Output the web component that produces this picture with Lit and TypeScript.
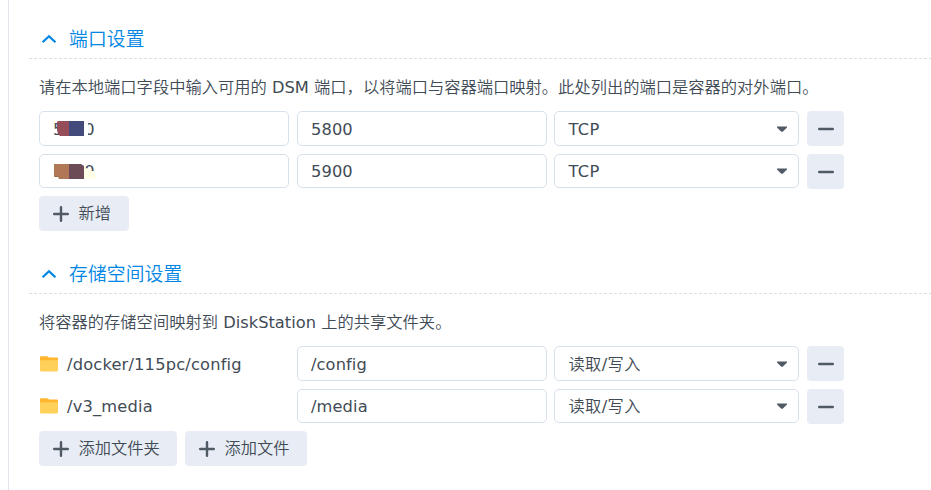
import { LitElement, html, css, svg } from "lit";
import { customElement } from "lit/decorators.js";

const chevron = svg`<svg class="chev" width="16" height="10" viewBox="0 0 16 10"><path d="M1.6 8.3 8 2.2l6.4 6.1" fill="none" stroke="#0086e5" stroke-width="2.2"/></svg>`;
const plus = svg`<svg class="plus" width="16" height="16" viewBox="0 0 16 16"><path d="M1.2 8h13.6M8 1.2v13.6" stroke="#505a64" stroke-width="2.4" stroke-linecap="round"/></svg>`;
const minus = svg`<svg width="16" height="4" viewBox="0 0 16 4"><path d="M1.2 2h13.6" stroke="#505a64" stroke-width="2.4" stroke-linecap="round"/></svg>`;
const caret = svg`<svg width="10" height="6" viewBox="0 0 10 6"><path d="M0 .5h10v1L6.2 5.2q-1.2 1-2.4 0L0 1.5z" fill="#505a64"/></svg>`;
const folder = svg`<svg class="folder" width="18" height="16" viewBox="0 0 18 16"><path d="M0 1.2Q0 .2 1 .2h6.4L9 1.6h8q1 0 1 1V8H0z" fill="#ffb62e"/><path d="M0 5.2q0-1 1-1h16q1 0 1 1V14q0 1.6-1.4 1.6H1.4Q0 15.6 0 14z" fill="#ffd05a"/></svg>`;
const masks = [
  svg`<svg class="mask" width="46" height="20" viewBox="0 0 46 20"><path d="M31 2h4v17h-4z" fill="#fff"/><path d="M4 5l1-1h11v15H7l-2-2-1-4z" fill="#954d59"/><path d="M16 4h15v15H16z" fill="#424b7b"/></svg>`,
  svg`<svg class="mask" width="46" height="20" viewBox="0 0 46 20"><path d="M1 4h15v15H6l-1-2-4-1z" fill="#b17857"/><path d="M16 4h12l3 2v13H16z" fill="#6c4b57"/><path d="M31 9l3-1 4 3h3l2 8H31z" fill="#ffffe8"/></svg>`,
];

@customElement("app-root")
export class AppRoot extends LitElement {
  static styles = css`
    :host { display: block; height: 490px; overflow: hidden; background: #fff;
      font: 16.25px/20px "DejaVu Sans", "Noto Sans CJK SC", sans-serif; color: #414b55; }
    .panel { box-sizing: border-box; height: 490px; margin-left: 8px; padding: 20px 0 0 20px; border-left: 1px solid #e0e5eb; }
    section { height: 235px; }
    header { display: flex; align-items: center; height: 38px; padding-left: 12px; color: #0086e5;
      font-size: 18.75px; }
    .chev { margin-right: 12px; }
    .title { line-height: 38px; padding-top: 2px; font-weight: 350; letter-spacing: 0.15px; }
    .rule { height: 1px; background: repeating-linear-gradient(90deg, #d7dde3 0 3px, #fff 3px 5px); }
    .body { padding-left: 10px; }
    .desc { height: 52px; line-height: 57px; white-space: nowrap; letter-spacing: 0.02px; }
    .grid { display: grid; grid-template-columns: 250px 250px 245px 37px; grid-template-rows: 35px 34px; column-gap: 8px; row-gap: 8px; }
    .field { box-sizing: border-box; display: flex; align-items: center; padding: 1px 13px 0; border: 1px solid #d7e1eb; border-radius: 5px; }
    .field > span { padding-top: 1.2px; letter-spacing: 0.1px; }
    .select { justify-content: space-between; margin-left: -1px; width: 245px; padding: 0 11px 0 13.5px; }
    .select > span { padding-top: 2.2px; letter-spacing: 0.35px; }
    .masked { position: relative; }
    .mask { position: absolute; left: 13px; top: 5px; }
    .path { display: flex; align-items: center; }
    .path span { padding-top: 2px; letter-spacing: 0.18px; }
    .folder { margin: 0 9px 0 1px; }
    .btn { box-sizing: border-box; display: flex; align-items: center; height: 35px; background: #e8edf5; border-radius: 4px; }
    .remove { justify-content: center; width: 37px; margin-left: -1px; }
    .actions { display: flex; gap: 8px; margin-top: 8px; }
    .add { padding: 0 17.3px 0 14px; }
    .add:only-child { width: 90px; }
    .plus { margin-right: 9.5px; }
    .cjk { font-weight: 350; }
    .latin { font-weight: 400; }
  `;

  mixed(text: string) {
    return text.split(/([\x21-\x7e]+)/).map((part, i) => (i % 2 ? html`<span class="latin">${part}</span>` : part));
  }

  select(text: string) {
    return html`<div class="field select"><span class="cjk">${this.mixed(text)}</span>${caret}</div><div class="btn remove">${minus}</div>`;
  }

  add(text: string) {
    return html`<div class="btn add">${plus}<span class="cjk">${text}</span></div>`;
  }

  render() {
    return html`<div class="panel">
      <section>
        <header>${chevron}<span class="title">端口设置</span></header>
        <div class="rule"></div>
        <div class="body">
          <div class="desc cjk">${this.mixed("请在本地端口字段中输入可用的 DSM 端口，以将端口与容器端口映射。此处列出的端口是容器的对外端口。")}</div>
          <div class="grid">
            ${["5800", "5900"].map((port, i) => html`<div class="field masked"><span>${port}</span>${masks[i]}</div><div class="field"><span>${port}</span></div>${this.select("TCP")}`)}
          </div>
          <div class="actions">${this.add("新增")}</div>
        </div>
      </section>
      <section>
        <header>${chevron}<span class="title">存储空间设置</span></header>
        <div class="rule"></div>
        <div class="body">
          <div class="desc cjk">${this.mixed("将容器的存储空间映射到 DiskStation 上的共享文件夹。")}</div>
          <div class="grid">
            ${[["/docker/115pc/config", "/config"], ["/v3_media", "/media"]].map(([a, b]) => html`<div class="path">${folder}<span>${a}</span></div><div class="field"><span>${b}</span></div>${this.select("读取/写入")}`)}
          </div>
          <div class="actions">${this.add("添加文件夹")}${this.add("添加文件")}</div>
        </div>
      </section>
    </div>`;
  }
}
